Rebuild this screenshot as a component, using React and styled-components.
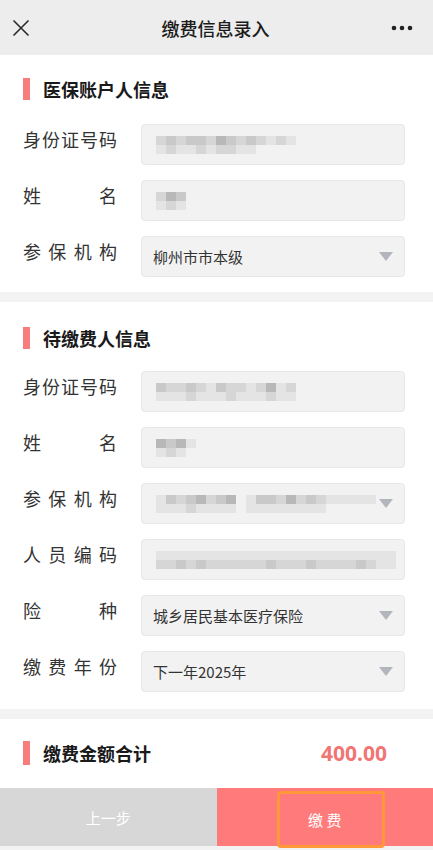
import React from 'react'
import styled, { createGlobalStyle } from 'styled-components'

const GlobalStyle = createGlobalStyle`
  html, body {
    margin: 0;
    padding: 0;
    background: #f3f3f3;
    font-family: "Noto Sans CJK SC", "Noto Sans", sans-serif;
    color: #333;
  }
`

// shades for the blurred (pixelated) values, 0 = none, 1..5 darker
const mosaics = {
  id1: [[2, 3, 2, 3, 3, 2, 4, 3, 2, 3, 2, 1, 2, 1], [1, 2, 1, 1, 2, 1, 2, 2, 1, 1, 0, 0, 0, 0]],
  name1: [[2, 4, 3], [1, 2, 1]],
  id2: [[3, 2, 2, 3, 2, 1, 3, 2, 2, 1, 2, 4, 1, 2], [1, 1, 1, 2, 1, 1, 1, 2, 1, 1, 1, 2, 1, 1]],
  name2: [[4, 3, 4, 1], [1, 2, 1, 0]],
  org2: [[1, 3, 2, 3, 4, 2, 3, 4, 0, 1, 3, 3, 2, 4, 2, 3, 2, 1, 1, 1, 1, 1], [1, 1, 1, 2, 1, 1, 1, 1, 0, 1, 1, 1, 1, 1, 1, 1, 1, 0, 0, 0, 0, 0]],
  code2: [[1, 1, 1, 1, 1, 1, 1, 1, 1, 1, 1, 1, 1, 1, 1, 1, 1, 1, 1, 1, 1, 1, 1, 1], [2, 2, 3, 2, 3, 2, 2, 2, 2, 2, 2, 3, 2, 2, 2, 3, 2, 2, 2, 2, 3, 2, 1, 1]],
}

const shadeColor = ['transparent', '#e4e4e4', '#d6d6d6', '#c9c9c9', '#b8b8b8']

function Mosaic({ rows, cell = 10 }) {
  return (
    <MosaicGrid>
      {rows.map((r, i) => (
        <MosaicRow key={i}>
          {r.map((s, j) => (
            <MosaicCell key={j} $shade={shadeColor[s]} $w={cell} />
          ))}
        </MosaicRow>
      ))}
    </MosaicGrid>
  )
}

function Field({ label, value, select, mosaic, cell }) {
  return (
    <Row>
      <Label>{label}</Label>
      <Box>
        {mosaic ? <Mosaic rows={mosaic} cell={cell} /> : <Value>{value}</Value>}
        {select && <Arrow />}
      </Box>
    </Row>
  )
}

function App() {
  return (
    <>
      <GlobalStyle />
      <Page>
        <NavBar>
          <svg width="18" height="18" viewBox="0 0 18 18">
            <path d="M1.5 1.5 L16.5 16.5 M16.5 1.5 L1.5 16.5" stroke="#2b2b2b" strokeWidth="1.6" fill="none" />
          </svg>
          <NavTitle>缴费信息录入</NavTitle>
          <svg width="22" height="6" viewBox="0 0 22 6">
            <circle cx="3" cy="3" r="2.3" fill="#222" />
            <circle cx="11" cy="3" r="2.3" fill="#222" />
            <circle cx="19" cy="3" r="2.3" fill="#222" />
          </svg>
        </NavBar>

        <Section $top={23} $gap={24} $bottom={15}>
          <SectionTitle>医保账户人信息</SectionTitle>
          <Rows>
            <Field label="身份证号码" mosaic={mosaics.id1} />
            <Field label="姓名" mosaic={mosaics.name1} />
            <Field label="参保机构" value="柳州市市本级" select />
          </Rows>
        </Section>

        <Section $top={25} $gap={22} $bottom={17}>
          <SectionTitle>待缴费人信息</SectionTitle>
          <Rows>
            <Field label="身份证号码" mosaic={mosaics.id2} />
            <Field label="姓名" mosaic={mosaics.name2} />
            <Field label="参保机构" mosaic={mosaics.org2} select />
            <Field label="人员编码" mosaic={mosaics.code2} />
            <Field label="险种" value="城乡居民基本医疗保险" select />
            <Field label="缴费年份" value="下一年2025年" select />
          </Rows>
        </Section>

        <TotalBar>
          <SectionTitle $bar={24}>缴费金额合计</SectionTitle>
          <Amount>400.00</Amount>
        </TotalBar>

        <Footer>
          <FootButton $bg="#d7d7d7">上一步</FootButton>
          <FootButton $bg="#ff7b7b">
            <Focus>缴 费</Focus>
          </FootButton>
        </Footer>
      </Page>
    </>
  )
}

const Page = styled.div`
  width: 433px;
  min-height: 850px;
  display: flex;
  flex-direction: column;
  background: #f3f3f3;
`

const NavBar = styled.div`
  height: 55px;
  background: #ededed;
  display: flex;
  align-items: center;
  justify-content: space-between;
  padding: 0 20px 0 12px;
  box-sizing: border-box;
  flex-shrink: 0;
`

const NavTitle = styled.div`
  font-size: 18px;
  font-weight: 500;
  color: #1c1c1c;
  margin-left: 10px;
`

const Section = styled.div`
  background: #fff;
  padding: ${(p) => p.$top}px 28px ${(p) => p.$bottom}px 23px;
  margin-bottom: 10px;
  display: flex;
  flex-direction: column;
  gap: ${(p) => p.$gap}px;
`

const SectionTitle = styled.div`
  display: flex;
  align-items: center;
  font-size: 18px;
  font-weight: 700;
  color: #1a1a1a;
  line-height: 22px;

  &::before {
    content: '';
    width: 7px;
    height: ${(p) => p.$bar || 22}px;
    background: #f77c7c;
    margin-right: 13px;
  }
`

const Rows = styled.div`
  display: flex;
  flex-direction: column;
  gap: 15px;
`

const Row = styled.div`
  display: flex;
  align-items: flex-start;
  height: 41px;
`

const Label = styled.div`
  width: 94px;
  flex-shrink: 0;
  margin-right: 24px;
  padding-top: 3px;
  font-size: 18px;
  line-height: 24px;
  color: #333;
  white-space: nowrap;
  text-align: justify;
  text-align-last: justify;
`

const Box = styled.div`
  flex: 1;
  height: 41px;
  box-sizing: border-box;
  background: #f2f2f2;
  border: 1px solid #e7e7e7;
  border-radius: 4px;
  display: flex;
  align-items: center;
  justify-content: space-between;
  padding: 0 11px 0 11px;
  overflow: hidden;
`

const Value = styled.span`
  font-size: 15px;
  color: #333;
`

const Arrow = styled.span`
  width: 0;
  height: 0;
  border-left: 7px solid transparent;
  border-right: 7px solid transparent;
  border-top: 9px solid #b2b5bb;
  margin-left: auto;
`

const MosaicGrid = styled.div`
  display: flex;
  flex-direction: column;
  margin-left: 3px;
`

const MosaicRow = styled.div`
  display: flex;
`

const MosaicCell = styled.span`
  width: ${(p) => p.$w}px;
  height: 9px;
  background: ${(p) => p.$shade};
`

const TotalBar = styled.div`
  background: #fff;
  height: 69px;
  display: flex;
  align-items: center;
  justify-content: space-between;
  padding: 0 46px 2px 23px;
  box-sizing: border-box;
`

const Amount = styled.div`
  font-size: 21px;
  font-weight: 700;
  color: #f07575;
  font-family: "Noto Sans", "Open Sans", sans-serif;
`

const Footer = styled.div`
  display: flex;
  height: 58px;
`

const FootButton = styled.div`
  flex: 1;
  background: ${(p) => p.$bg};
  color: #fff;
  font-size: 15px;
  display: flex;
  align-items: center;
  justify-content: center;
`

const Focus = styled.div`
  width: 108px;
  height: 57px;
  box-sizing: border-box;
  border: 3px solid #ff9838;
  border-radius: 4px;
  margin: 3px 0 -2px 12px;
  padding-right: 12px;
  display: flex;
  align-items: center;
  justify-content: center;
`

export default App
